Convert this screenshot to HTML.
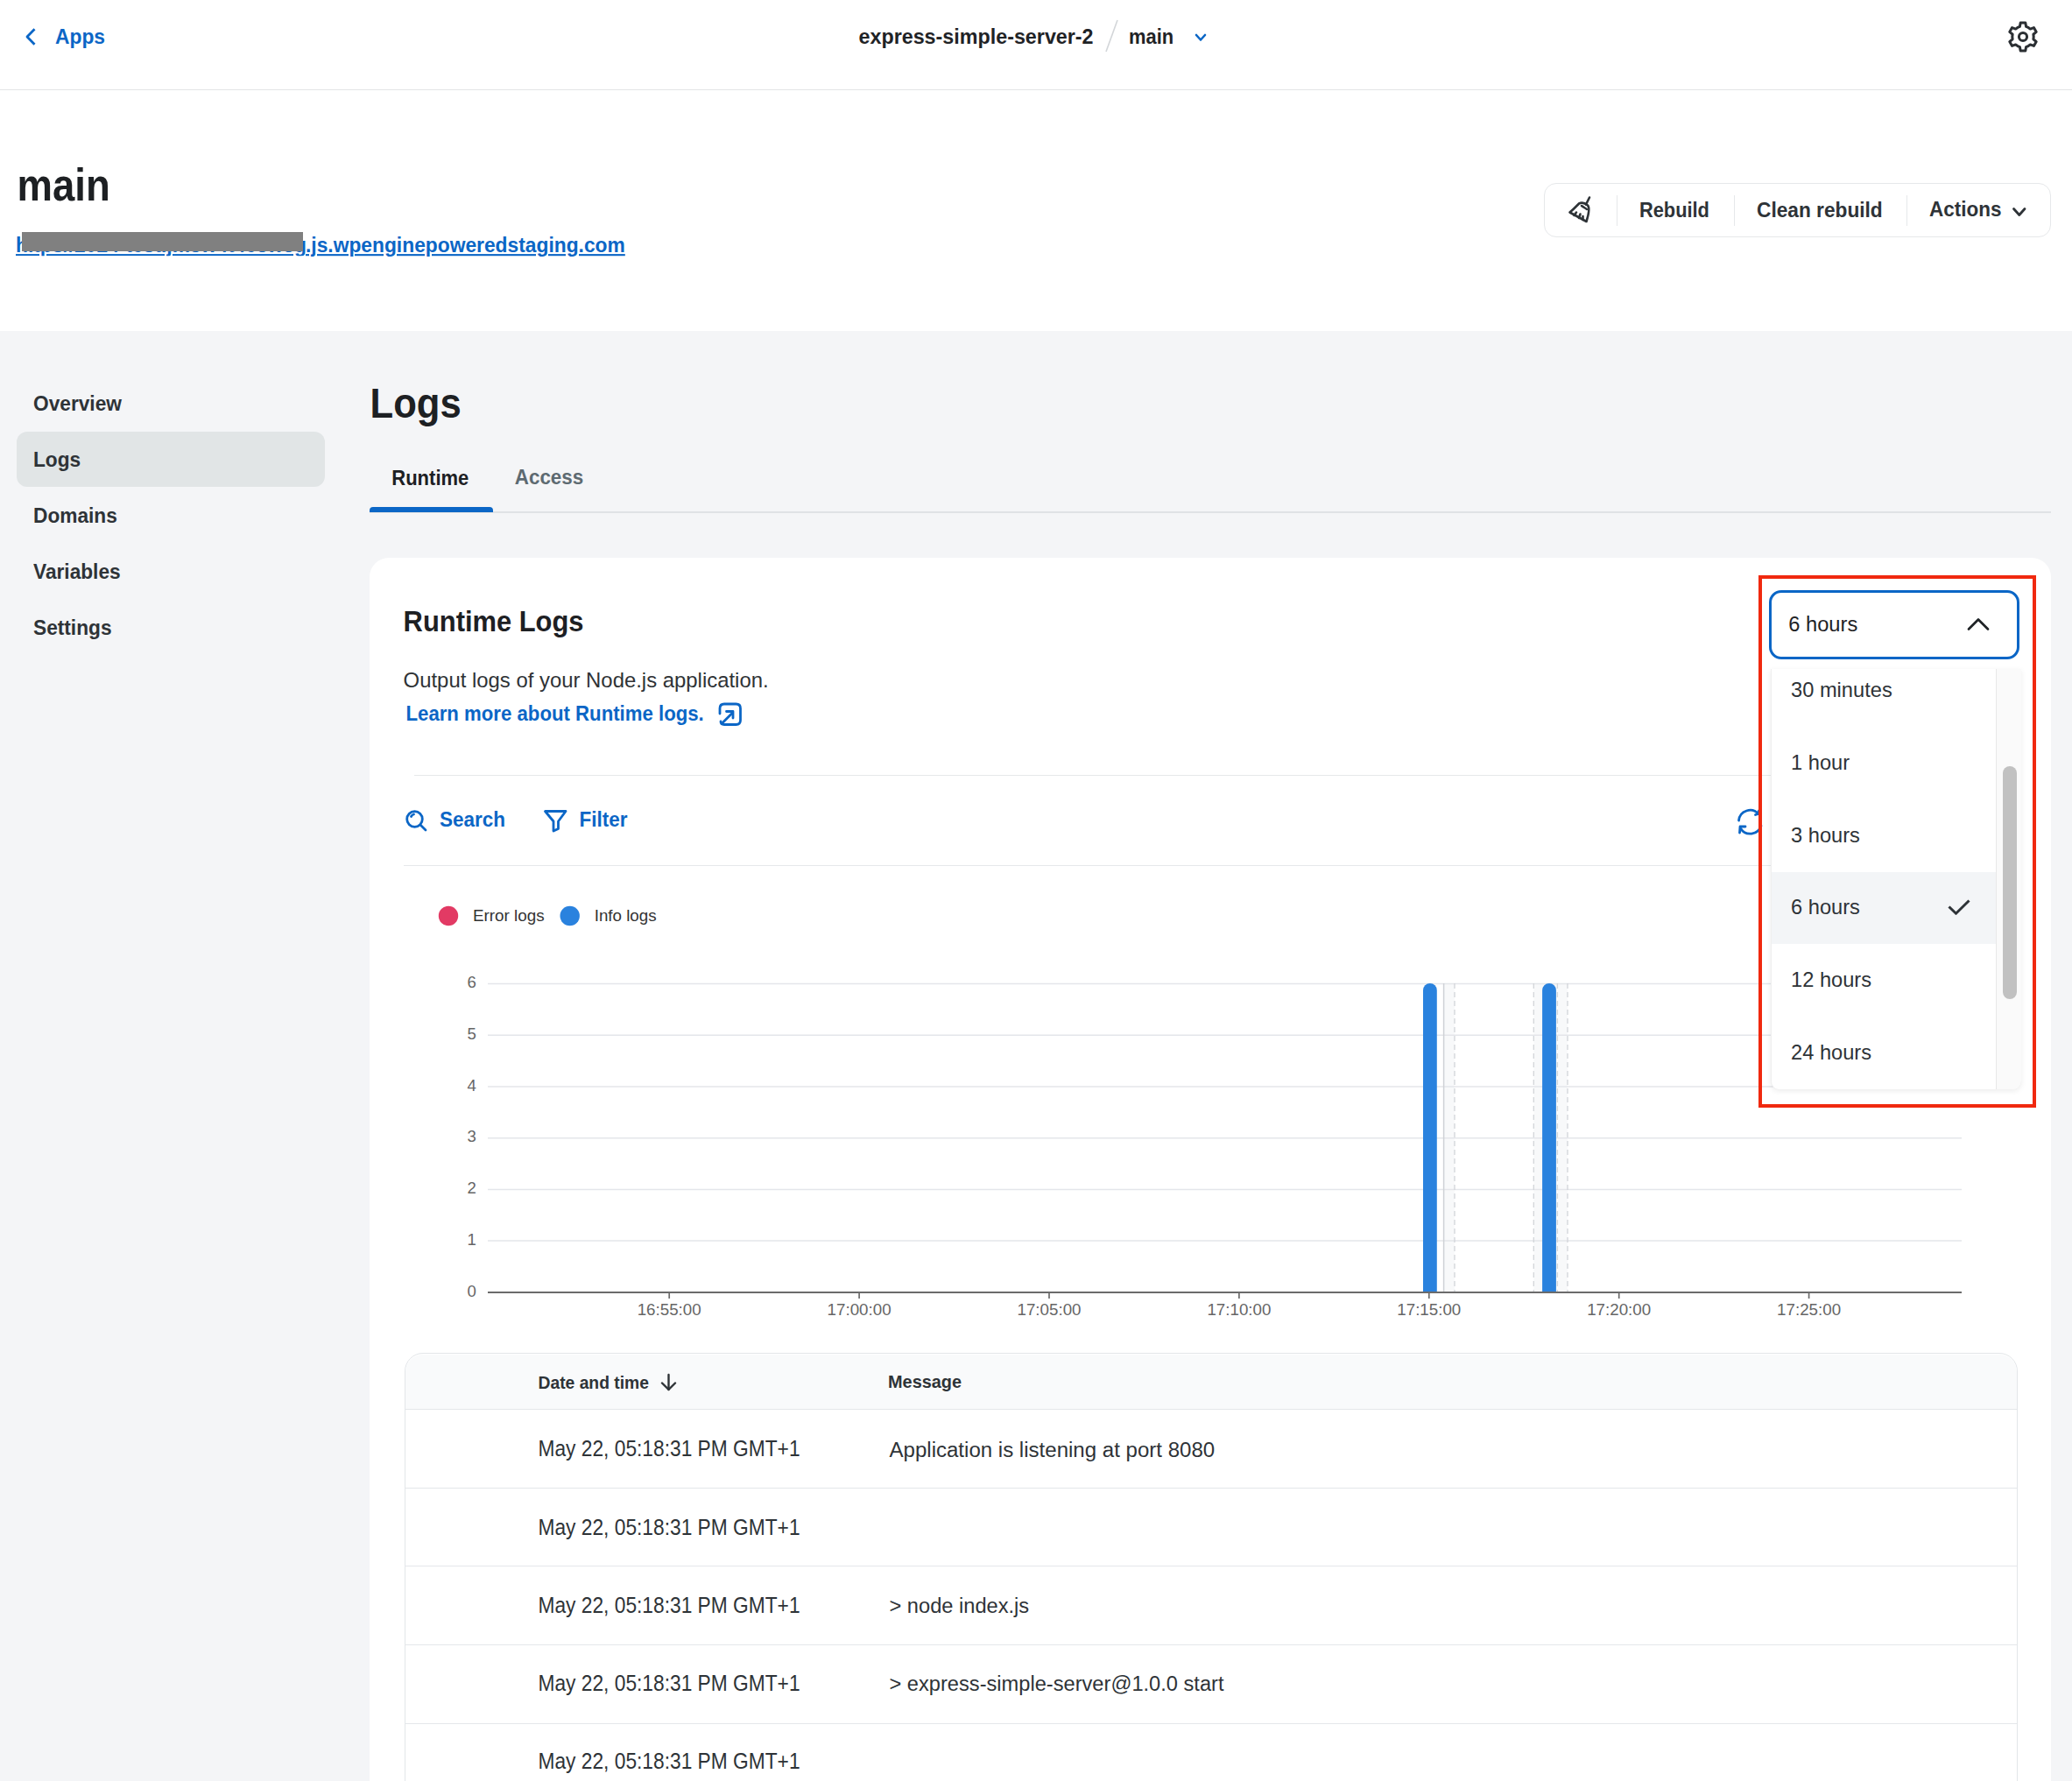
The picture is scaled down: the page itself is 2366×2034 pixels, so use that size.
<!DOCTYPE html>
<html><head><meta charset="utf-8"><title>Logs</title>
<style>
html,body{margin:0;padding:0;width:2366px;height:2034px;overflow:hidden;background:#fff;position:relative}
body{font-family:"Liberation Sans",sans-serif}
.a{position:absolute}
.t{position:absolute;white-space:pre;font-family:"Liberation Sans",sans-serif}
</style></head><body>
<div class="a" style="left:0.0px;top:102.0px;width:2366.0px;height:1.3px;background:#e3e4e6"></div>
<svg class="a" style="left:0;top:0" width="2366" height="102"><polyline points="39.5,33.2 31,42 39.5,50.8" fill="none" stroke="#0b66c6" stroke-width="2.8" stroke-linecap="butt" stroke-linejoin="round"/><line x1="1276" y1="23" x2="1263" y2="59" stroke="#d3d6d9" stroke-width="1.6"/><polyline points="1366,40 1371,45.5 1376,40" fill="none" stroke="#0b66c6" stroke-width="2.6" stroke-linecap="round" stroke-linejoin="round"/></svg>
<div class="t" style="left:63.0px;top:30.7px;font-size:22.8px;line-height:22.8px;font-weight:700;color:#0b66c6;transform:scaleY(1.06);transform-origin:0 19.30px;">Apps</div>
<div class="t" style="left:980.5px;top:31.1px;font-size:23.3px;line-height:23.3px;font-weight:700;color:#1f2326;transform:scaleY(1.06);transform-origin:0 19.72px;">express-simple-server-2</div>
<div class="t" style="left:1289.0px;top:31.5px;font-size:21.9px;line-height:21.9px;font-weight:700;color:#1f2326;transform:scaleY(1.06);transform-origin:0 18.54px;">main</div>
<svg class="a" style="left:2280px;top:12px" width="60" height="60" viewBox="2280 12 60 60"><polygon points="2303.90,31.43 2306.43,30.33 2307.19,26.05 2312.81,26.05 2313.57,30.33 2316.10,31.43 2318.32,33.08 2322.41,31.59 2325.22,36.46 2321.89,39.26 2322.20,42.00 2321.89,44.74 2325.22,47.54 2322.41,52.41 2318.32,50.92 2316.10,52.57 2313.57,53.67 2312.81,57.95 2307.19,57.95 2306.43,53.67 2303.90,52.57 2301.68,50.92 2297.59,52.41 2294.78,47.54 2298.11,44.74 2297.80,42.00 2298.11,39.26 2294.78,36.46 2297.59,31.59 2301.68,33.08" fill="none" stroke="#2b2f33" stroke-width="3" stroke-linejoin="round"/><circle cx="2310" cy="42" r="4.6" fill="none" stroke="#2b2f33" stroke-width="3"/></svg>
<div class="t" style="left:19.5px;top:191.0px;font-size:45.5px;line-height:45.5px;font-weight:700;color:#1d2023;transform:scaleY(1.12);transform-origin:0 38.52px;">main</div>
<div class="t" style="left:18.0px;top:269.1px;font-size:22.8px;line-height:22.8px;font-weight:700;color:#0b66c6;transform:scaleY(1.06);transform-origin:0 19.30px;text-decoration:underline;text-underline-offset:2px;width:332px;overflow:hidden;">hltps//2024-test.jm5w4t4e8w3g3</div>
<div class="t" style="left:349.0px;top:269.1px;font-size:22.8px;line-height:22.8px;font-weight:700;color:#0b66c6;transform:scaleY(1.06);transform-origin:0 19.30px;text-decoration:underline;text-underline-offset:2px;">.js.wpenginepoweredstaging.com</div>
<div class="a" style="left:25.0px;top:265.0px;width:321.0px;height:22.0px;background:#808080"></div>
<div class="a" style="left:1762.5px;top:208.5px;width:579.0px;height:62.5px;border:1.6px solid #e6e8ea;border-radius:14px;box-sizing:border-box;background:#fff"></div>
<div class="a" style="left:1845.8px;top:222.7px;width:1.6px;height:35.7px;background:#e6e8ea"></div>
<div class="a" style="left:1979.6px;top:222.7px;width:1.6px;height:35.7px;background:#e6e8ea"></div>
<div class="a" style="left:2176.7px;top:222.7px;width:1.6px;height:35.7px;background:#e6e8ea"></div>
<div class="t" style="left:1872.0px;top:229.5px;font-size:21.8px;line-height:21.8px;font-weight:700;color:#2e3337;transform:scaleY(1.06);transform-origin:0 18.45px;">Rebuild</div>
<div class="t" style="left:2006.0px;top:228.8px;font-size:22.7px;line-height:22.7px;font-weight:700;color:#2e3337;transform:scaleY(1.06);transform-origin:0 19.22px;">Clean rebuild</div>
<div class="t" style="left:2203.0px;top:229.0px;font-size:22.5px;line-height:22.5px;font-weight:700;color:#2e3337;transform:scaleY(1.06);transform-origin:0 19.05px;">Actions</div>
<svg class="a" style="left:0;top:0" width="2366" height="300"><polyline points="2299.5,238.5 2305.8,245.5 2312,238.5" fill="none" stroke="#2e3337" stroke-width="2.8" stroke-linecap="round" stroke-linejoin="round"/><g fill="none" stroke="#2e3337" stroke-width="2.6" stroke-linecap="round" stroke-linejoin="round"><line x1="1815" y1="225.5" x2="1811" y2="233.5"/><path d="M1792.5,242.5 C1797,239 1800,235.5 1803,232.5 C1806,231 1810,232 1813,234.5 C1815.5,237 1814,245 1811.5,253 Z"/><path d="M1806,235 C1808,236.5 1810,237.5 1812,239"/><line x1="1800" y1="242.5" x2="1797.5" y2="246"/><line x1="1804.5" y1="244.5" x2="1803" y2="249"/><line x1="1807.5" y1="247" x2="1807.5" y2="251"/></g></svg>
<div class="a" style="left:0.0px;top:378.0px;width:2366.0px;height:1656.0px;background:#f4f5f7"></div>
<div class="a" style="left:19.0px;top:493.0px;width:351.8px;height:63.0px;background:#e1e5e6;border-radius:12px"></div>
<div class="t" style="left:38.0px;top:450.2px;font-size:22.7px;line-height:22.7px;font-weight:700;color:#2e3337;transform:scaleY(1.06);transform-origin:0 19.22px;">Overview</div>
<div class="t" style="left:38.0px;top:514.2px;font-size:22.7px;line-height:22.7px;font-weight:700;color:#2e3337;transform:scaleY(1.06);transform-origin:0 19.22px;">Logs</div>
<div class="t" style="left:38.0px;top:578.2px;font-size:22.7px;line-height:22.7px;font-weight:700;color:#2e3337;transform:scaleY(1.06);transform-origin:0 19.22px;">Domains</div>
<div class="t" style="left:38.0px;top:642.2px;font-size:22.7px;line-height:22.7px;font-weight:700;color:#2e3337;transform:scaleY(1.06);transform-origin:0 19.22px;">Variables</div>
<div class="t" style="left:38.0px;top:706.2px;font-size:22.7px;line-height:22.7px;font-weight:700;color:#2e3337;transform:scaleY(1.06);transform-origin:0 19.22px;">Settings</div>
<div class="t" style="left:422.5px;top:440.6px;font-size:43.6px;line-height:43.6px;font-weight:700;color:#1d2023;transform:scaleY(1.11);transform-origin:0 36.91px;">Logs</div>
<div class="t" style="left:447.3px;top:535.6px;font-size:22.0px;line-height:22.0px;font-weight:700;color:#1d2023;transform:scaleY(1.06);transform-origin:0 18.62px;">Runtime</div>
<div class="t" style="left:587.8px;top:535.2px;font-size:22.4px;line-height:22.4px;font-weight:700;color:#5d6a71;transform:scaleY(1.06);transform-origin:0 18.96px;">Access</div>
<div class="a" style="left:422.0px;top:584.3px;width:1920.0px;height:1.3px;background:#dfe2e5"></div>
<div class="a" style="left:422.0px;top:579.0px;width:141.0px;height:6.3px;background:#0b66c6;border-radius:4px 4px 0 0"></div>
<div class="a" style="left:422.0px;top:636.5px;width:1920.0px;height:1463.5px;background:#fff;border-radius:22px"></div>
<div class="t" style="left:460.6px;top:695.5px;font-size:30.9px;line-height:30.9px;font-weight:700;color:#1d2023;transform:scaleY(1.08);transform-origin:0 26.16px;">Runtime Logs</div>
<div class="t" style="left:460.6px;top:765.4px;font-size:23.9px;line-height:23.9px;font-weight:400;color:#2f3336;">Output logs of your Node.js application.</div>
<div class="t" style="left:463.5px;top:805.2px;font-size:22.2px;line-height:22.2px;font-weight:700;color:#0b66c6;transform:scaleY(1.06);transform-origin:0 18.79px;">Learn more about Runtime logs.</div>
<div class="a" style="left:473.0px;top:884.5px;width:1830.0px;height:1.5px;background:#e6e8ea"></div>
<div class="a" style="left:461.3px;top:987.5px;width:1841.7px;height:1.5px;background:#e6e8ea"></div>
<div class="t" style="left:502.0px;top:925.8px;font-size:22.5px;line-height:22.5px;font-weight:700;color:#0b66c6;transform:scaleY(1.06);transform-origin:0 19.05px;">Search</div>
<div class="t" style="left:661.5px;top:925.8px;font-size:22.5px;line-height:22.5px;font-weight:700;color:#0b66c6;transform:scaleY(1.06);transform-origin:0 19.05px;">Filter</div>
<svg class="a" style="left:0;top:0" width="2366" height="1000"><g fill="none" stroke="#0b66c6" stroke-width="2.8" stroke-linecap="round" stroke-linejoin="round"><path d="M822,815 V809 Q822,804 827,804 H840.5 Q845.5,804 845.5,809 V822.5 Q845.5,827.5 840.5,827.5 H827 Q823,827.5 823,824"/><line x1="825.5" y1="825" x2="836.5" y2="814"/><path d="M829.5,812.5 H837 V820"/><circle cx="473.5" cy="935.5" r="8.8"/><line x1="480" y1="942" x2="486" y2="948"/><path d="M469.5,932.5 Q470.5,930.5 472.5,930"/><path d="M622.5,926.5 H646 L637.5,938 V946.5 L632,949 V938 Z"/><path d="M1985.5,937 A13,13 0 0 1 2008,929.5"/><path d="M2004.5,930.5 L2008,929.5 L2008.5,926"/><path d="M2011,943 A13,13 0 0 1 1987.5,946"/><path d="M1986.5,951 L1987,944 L1993,944"/></g></svg>
<svg class="a" style="left:0;top:1000px" width="800" height="100"><circle cx="512" cy="46" r="11.2" fill="#e23a64"/><circle cx="650.7" cy="46" r="11.2" fill="#2a82de"/></svg>
<div class="t" style="left:540.0px;top:1037.0px;font-size:18.85px;line-height:18.85px;font-weight:400;color:#333;">Error logs</div>
<div class="t" style="left:678.7px;top:1037.1px;font-size:18.75px;line-height:18.75px;font-weight:400;color:#333;">Info logs</div>
<svg class="a" style="left:0;top:0" width="2366" height="1520"><rect x="1648.5" y="1123" width="12.5" height="353" fill="#f8f9fa"/><rect x="1751.3" y="1123" width="38.7" height="353" fill="#f8f9fa"/><line x1="557" y1="1123.5" x2="2240" y2="1123.5" stroke="#e4e6ea" stroke-width="1.5"/><line x1="557" y1="1182.2" x2="2240" y2="1182.2" stroke="#e4e6ea" stroke-width="1.5"/><line x1="557" y1="1240.9" x2="2240" y2="1240.9" stroke="#e4e6ea" stroke-width="1.5"/><line x1="557" y1="1299.7" x2="2240" y2="1299.7" stroke="#e4e6ea" stroke-width="1.5"/><line x1="557" y1="1358.4" x2="2240" y2="1358.4" stroke="#e4e6ea" stroke-width="1.5"/><line x1="557" y1="1417.1" x2="2240" y2="1417.1" stroke="#e4e6ea" stroke-width="1.5"/><line x1="1648.6" y1="1123" x2="1648.6" y2="1476" stroke="#cfd2d6" stroke-width="1.5"/><line x1="1661" y1="1123" x2="1661" y2="1476" stroke="#d2d5d9" stroke-width="1.3" stroke-dasharray="6,4"/><line x1="1751.3" y1="1123" x2="1751.3" y2="1476" stroke="#d2d5d9" stroke-width="1.3" stroke-dasharray="6,4"/><line x1="1778.4" y1="1123" x2="1778.4" y2="1476" stroke="#d2d5d9" stroke-width="1.3" stroke-dasharray="6,4"/><line x1="1790" y1="1123" x2="1790" y2="1476" stroke="#d2d5d9" stroke-width="1.3" stroke-dasharray="6,4"/><path d="M1625,1476 V1130.9 A7.9,7.9 0 0 1 1640.8,1130.9 V1476 Z" fill="#2a82de"/><path d="M1761.1,1476 V1130.9 A7.9,7.9 0 0 1 1776.8999999999999,1130.9 V1476 Z" fill="#2a82de"/><line x1="557" y1="1476" x2="2240" y2="1476" stroke="#6b6b6b" stroke-width="1.8"/><line x1="764.2" y1="1476" x2="764.2" y2="1483" stroke="#6b6b6b" stroke-width="1.7"/><line x1="981.1" y1="1476" x2="981.1" y2="1483" stroke="#6b6b6b" stroke-width="1.7"/><line x1="1198.0" y1="1476" x2="1198.0" y2="1483" stroke="#6b6b6b" stroke-width="1.7"/><line x1="1414.9" y1="1476" x2="1414.9" y2="1483" stroke="#6b6b6b" stroke-width="1.7"/><line x1="1631.8" y1="1476" x2="1631.8" y2="1483" stroke="#6b6b6b" stroke-width="1.7"/><line x1="1848.7" y1="1476" x2="1848.7" y2="1483" stroke="#6b6b6b" stroke-width="1.7"/><line x1="2065.6" y1="1476" x2="2065.6" y2="1483" stroke="#6b6b6b" stroke-width="1.7"/></svg>
<div class="t" style="left:533.5px;top:1113.3px;font-size:18.6px;line-height:18.6px;font-weight:400;color:#666;">6</div>
<div class="t" style="left:533.5px;top:1172.0px;font-size:18.6px;line-height:18.6px;font-weight:400;color:#666;">5</div>
<div class="t" style="left:533.5px;top:1230.7px;font-size:18.6px;line-height:18.6px;font-weight:400;color:#666;">4</div>
<div class="t" style="left:533.5px;top:1289.4px;font-size:18.6px;line-height:18.6px;font-weight:400;color:#666;">3</div>
<div class="t" style="left:533.5px;top:1348.1px;font-size:18.6px;line-height:18.6px;font-weight:400;color:#666;">2</div>
<div class="t" style="left:533.5px;top:1406.8px;font-size:18.6px;line-height:18.6px;font-weight:400;color:#666;">1</div>
<div class="t" style="left:533.5px;top:1465.6px;font-size:18.6px;line-height:18.6px;font-weight:400;color:#666;">0</div>
<div class="t" style="left:704.2px;top:1487.1px;font-size:18.75px;line-height:18.75px;font-weight:400;color:#666;width:120px;text-align:center;">16:55:00</div>
<div class="t" style="left:921.1px;top:1487.1px;font-size:18.75px;line-height:18.75px;font-weight:400;color:#666;width:120px;text-align:center;">17:00:00</div>
<div class="t" style="left:1138.0px;top:1487.1px;font-size:18.75px;line-height:18.75px;font-weight:400;color:#666;width:120px;text-align:center;">17:05:00</div>
<div class="t" style="left:1354.9px;top:1487.1px;font-size:18.75px;line-height:18.75px;font-weight:400;color:#666;width:120px;text-align:center;">17:10:00</div>
<div class="t" style="left:1571.8px;top:1487.1px;font-size:18.75px;line-height:18.75px;font-weight:400;color:#666;width:120px;text-align:center;">17:15:00</div>
<div class="t" style="left:1788.7px;top:1487.1px;font-size:18.75px;line-height:18.75px;font-weight:400;color:#666;width:120px;text-align:center;">17:20:00</div>
<div class="t" style="left:2005.6px;top:1487.1px;font-size:18.75px;line-height:18.75px;font-weight:400;color:#666;width:120px;text-align:center;">17:25:00</div>
<div class="a" style="left:461.5px;top:1545.0px;width:1842.5px;height:555.0px;border:1.6px solid #e3e6e9;border-radius:21px;box-sizing:border-box;background:#fff;overflow:hidden"></div>
<div class="a" style="left:463.0px;top:1546.5px;width:1839.5px;height:62.5px;background:#f9fafb;border-radius:20px 20px 0 0"></div>
<div class="a" style="left:462.0px;top:1609.0px;width:1841.0px;height:1.3px;background:#e4e7ea"></div>
<div class="a" style="left:462.0px;top:1699.0px;width:1841.0px;height:1.3px;background:#e4e7ea"></div>
<div class="a" style="left:462.0px;top:1788.0px;width:1841.0px;height:1.3px;background:#e4e7ea"></div>
<div class="a" style="left:462.0px;top:1878.0px;width:1841.0px;height:1.3px;background:#e4e7ea"></div>
<div class="a" style="left:462.0px;top:1968.0px;width:1841.0px;height:1.3px;background:#e4e7ea"></div>
<div class="t" style="left:614.5px;top:1569.6px;font-size:19.3px;line-height:19.3px;font-weight:700;color:#2e3337;transform:scaleY(1.06);transform-origin:0 16.34px;">Date and time</div>
<div class="t" style="left:1014.0px;top:1569.1px;font-size:19.9px;line-height:19.9px;font-weight:700;color:#2e3337;transform:scaleY(1.06);transform-origin:0 16.85px;">Message</div>
<svg class="a" style="left:0;top:1550px" width="800" height="60"><g fill="none" stroke="#2e3337" stroke-width="2.4" stroke-linecap="round" stroke-linejoin="round"><line x1="763.5" y1="20" x2="763.5" y2="37"/><polyline points="756,29.5 763.5,37 771,29.5"/></g></svg>
<div class="t" style="left:614.5px;top:1644.3px;font-size:22.75px;line-height:22.75px;font-weight:400;color:#2e3337;transform:scaleY(1.1);transform-origin:0 19.26px;">May 22, 05:18:31 PM GMT+1</div>
<div class="t" style="left:1015.5px;top:1644.2px;font-size:24.05px;line-height:24.05px;font-weight:400;color:#2e3337;">Application is listening at port 8080</div>
<div class="t" style="left:614.5px;top:1733.5px;font-size:22.75px;line-height:22.75px;font-weight:400;color:#2e3337;transform:scaleY(1.1);transform-origin:0 19.26px;">May 22, 05:18:31 PM GMT+1</div>
<div class="t" style="left:614.5px;top:1822.7px;font-size:22.75px;line-height:22.75px;font-weight:400;color:#2e3337;transform:scaleY(1.1);transform-origin:0 19.26px;">May 22, 05:18:31 PM GMT+1</div>
<div class="t" style="left:1015.5px;top:1823.0px;font-size:23.65px;line-height:23.65px;font-weight:400;color:#2e3337;">&gt; node index.js</div>
<div class="t" style="left:614.5px;top:1911.9px;font-size:22.75px;line-height:22.75px;font-weight:400;color:#2e3337;transform:scaleY(1.1);transform-origin:0 19.26px;">May 22, 05:18:31 PM GMT+1</div>
<div class="t" style="left:1015.5px;top:1912.2px;font-size:23.65px;line-height:23.65px;font-weight:400;color:#2e3337;">&gt; express-simple-server@1.0.0 start</div>
<div class="t" style="left:614.5px;top:2001.1px;font-size:22.75px;line-height:22.75px;font-weight:400;color:#2e3337;transform:scaleY(1.1);transform-origin:0 19.26px;">May 22, 05:18:31 PM GMT+1</div>
<div class="a" style="left:2022.3px;top:763.5px;width:286.2px;height:480.3px;background:#fff;border-radius:0 0 9px 9px;box-shadow:0 2px 6px rgba(0,0,0,0.08);border-right:1px solid #e6e6e6;border-left:1px solid #efefef;box-sizing:border-box"></div>
<div class="a" style="left:2279.4px;top:763.5px;width:28.4px;height:480.3px;background:#fafafa;border-left:1px solid #e8e8e8;box-sizing:border-box;border-radius:0 0 9px 0"></div>
<div class="a" style="left:2287.0px;top:875.0px;width:16.0px;height:265.5px;background:#c1c1c1;border-radius:8px"></div>
<div class="a" style="left:2023.0px;top:995.6px;width:256.0px;height:82.0px;background:#f3f5f7"></div>
<div class="t" style="left:2045.0px;top:776.8px;font-size:23.67px;line-height:23.67px;font-weight:400;color:#2e3337;">30 minutes</div>
<div class="t" style="left:2045.0px;top:859.6px;font-size:23.67px;line-height:23.67px;font-weight:400;color:#2e3337;">1 hour</div>
<div class="t" style="left:2045.0px;top:942.5px;font-size:23.67px;line-height:23.67px;font-weight:400;color:#2e3337;">3 hours</div>
<div class="t" style="left:2045.0px;top:1025.3px;font-size:23.67px;line-height:23.67px;font-weight:400;color:#2e3337;">6 hours</div>
<div class="t" style="left:2045.0px;top:1108.2px;font-size:23.67px;line-height:23.67px;font-weight:400;color:#2e3337;">12 hours</div>
<div class="t" style="left:2045.0px;top:1191.0px;font-size:23.67px;line-height:23.67px;font-weight:400;color:#2e3337;">24 hours</div>
<svg class="a" style="left:2000px;top:660px" width="366" height="420" viewBox="2000 660 366 420"><polyline points="2225.5,1035.5 2233.5,1043.3 2248.5,1028.5" fill="none" stroke="#2e3337" stroke-width="3" stroke-linecap="butt" stroke-linejoin="round"/></svg>
<div class="a" style="left:2020.4px;top:674.3px;width:285.5px;height:78.7px;border:3px solid #0b66c6;border-radius:14px;box-sizing:border-box;background:#fff"></div>
<div class="t" style="left:2042.3px;top:701.5px;font-size:23.68px;line-height:23.68px;font-weight:400;color:#1f2326;">6 hours</div>
<svg class="a" style="left:2200px;top:690px" width="100" height="50" viewBox="2200 690 100 50"><polyline points="2248,718.5 2259,707.5 2270,718.5" fill="none" stroke="#1f2326" stroke-width="2.7" stroke-linecap="round" stroke-linejoin="round"/></svg>
<div class="a" style="left:2007.6px;top:657.2px;width:317.4px;height:607.8px;border:4.5px solid #f0290f;box-sizing:border-box"></div>
</body></html>
